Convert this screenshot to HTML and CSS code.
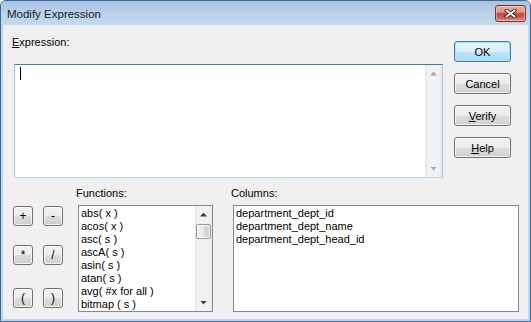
FILE: index.html
```html
<!DOCTYPE html>
<html lang="en">
<head>
  <meta charset="UTF-8" />
  <title>Modify Expression</title>
  <link rel="stylesheet" href="styles.css">
</head>
<body>

  <div class="window">
    <div class="titlebar">
      <span class="title">Modify Expression</span>
      <button class="close" title="Close">
        <svg width="13" height="9" viewBox="0 0 13 9">
          <path d="M2.5 1.5 L10.5 7.5 M10.5 1.5 L2.5 7.5" stroke="#4a1c1c" stroke-width="3.6" stroke-linecap="square" fill="none"/>
          <path d="M2.5 1.5 L10.5 7.5 M10.5 1.5 L2.5 7.5" stroke="#ffffff" stroke-width="1.8" stroke-linecap="square" fill="none"/>
        </svg>
      </button>
    </div>

    <div class="frame">
      <div class="content">

        <div class="top">
          <div class="expr">
            <div class="label label-expr"><u>E</u>xpression:</div>
            <div class="editbox">
              <div class="edit-text"><span class="caret"></span></div>
              <div class="scrollbar disabled">
                <div class="arrow up"></div>
                <div class="track"></div>
                <div class="arrow down"></div>
              </div>
            </div>
          </div>

          <div class="buttons">
            <button class="btn default">OK</button>
            <button class="btn">Cancel</button>
            <button class="btn"><u>V</u>erify</button>
            <button class="btn"><u>H</u>elp</button>
          </div>
        </div>

        <div class="bottom">
          <div class="ops">
            <button class="btn op">+</button>
            <button class="btn op">-</button>
            <button class="btn op">*</button>
            <button class="btn op">/</button>
            <button class="btn op">(</button>
            <button class="btn op">)</button>
          </div>

          <div class="functions">
            <div class="label">Functions:</div>
            <div class="listbox">
              <ul class="items">
                <li>abs( x )</li>
                <li>acos( x )</li>
                <li>asc( s )</li>
                <li>ascA( s )</li>
                <li>asin( s )</li>
                <li>atan( s )</li>
                <li>avg( #x for all )</li>
                <li>bitmap ( s )</li>
              </ul>
              <div class="scrollbar">
                <div class="arrow up"></div>
                <div class="track">
                  <div class="thumb"></div>
                </div>
                <div class="arrow down"></div>
              </div>
            </div>
          </div>

          <div class="columns">
            <div class="label">Columns:</div>
            <div class="listbox wide">
              <ul class="items">
                <li>department_dept_id</li>
                <li>department_dept_name</li>
                <li>department_dept_head_id</li>
              </ul>
            </div>
          </div>
        </div>

      </div>
    </div>
  </div>

</body>
</html>
```

FILE: styles.css
```css
* {
  box-sizing: border-box;
}

body {
  margin: 0;
  font-family: "Liberation Sans", Arial, sans-serif;
  font-size: 11px;
  color: #000;
  background: #f0f0f0;
}

.window {
  width: 531px;
  height: 322px;
  border: 1px solid #3a6a9c;
  border-radius: 6px 6px 0 0;
  display: flex;
  flex-direction: column;
  overflow: hidden;
  background: #bcd4ee;
}

.titlebar {
  height: 24px;
  display: flex;
  justify-content: space-between;
  align-items: flex-start;
  background: linear-gradient(#a8c2df, #bcd3ec 60%, #c3d8ef);
  padding: 0 4px 0 6px;
}

.title {
  font-size: 11.5px;
  line-height: 14px;
  margin-top: 6px;
  color: #1a1a1a;
}

.close {
  margin-top: 4px;
  width: 31px;
  height: 17px;
  padding: 0;
  border: 1px solid #7a3232;
  border-radius: 3px;
  background: linear-gradient(#eab0a3 0%, #df9283 42%, #c6483c 50%, #cd5c4e 75%, #e39282 100%);
  box-shadow: inset 0 0 0 1px rgba(255, 220, 210, 0.5);
  display: flex;
  align-items: center;
  justify-content: center;
}

.frame {
  flex: 1;
  padding: 0 2px 2px 2px;
  background: #bcd4ee;
}

.content {
  height: 100%;
  background: #f0f0f0;
  padding: 11px 0 0 11px;
}

.label {
  line-height: 13px;
  height: 13px;
  margin-left: -2px;
  margin-bottom: 5px;
}

.label-expr {
  margin-bottom: 15px;
}

.top {
  display: flex;
  align-items: flex-start;
}

.editbox {
  width: 429px;
  height: 114px;
  background: #fff;
  border: 1px solid #a4c9e3;
  border-top-color: #3d7bad;
  border-bottom-color: #b7d9ed;
  display: flex;
}

.edit-text {
  flex: 1;
  padding: 2px 0 0 5px;
}

.caret {
  display: block;
  width: 1px;
  height: 13px;
  background: #000;
}

.scrollbar {
  width: 17px;
  display: flex;
  flex-direction: column;
  background: linear-gradient(to right, #e6e6e6, #f2f2f2 20%, #f2f2f2 80%, #e9e9e9);
}

.scrollbar .track {
  flex: 1;
}

.arrow {
  height: 17px;
  display: flex;
  align-items: center;
  justify-content: center;
}

.arrow::before {
  content: "";
  width: 7px;
  height: 4px;
  background: #3e3e3e;
}

.arrow.up::before {
  clip-path: polygon(50% 0, 100% 100%, 0 100%);
}

.arrow.down::before {
  clip-path: polygon(0 0, 100% 0, 50% 100%);
}

.scrollbar.disabled .arrow::before {
  background: #a8a8a8;
}

.thumb {
  margin: 1px 1px 0 1px;
  height: 15px;
  border: 1px solid #979797;
  border-radius: 2px;
  background: linear-gradient(to right, #f4f4f4, #e6e6e6 50%, #d8d8d8 51%, #cfcfcf);
  box-shadow: inset 0 0 0 1px rgba(255, 255, 255, 0.8);
}

.buttons {
  margin-left: 11px;
  padding-top: 5px;
  display: flex;
  flex-direction: column;
  gap: 11px;
}

.btn {
  font-family: inherit;
  font-size: 11px;
  color: #000;
  width: 57px;
  height: 21px;
  padding: 0;
  border: 1px solid #707070;
  border-radius: 3px;
  background: linear-gradient(#f2f2f2 0%, #ebebeb 50%, #dddddd 51%, #cfcfcf 100%);
  box-shadow: inset 0 0 0 1px rgba(255, 255, 255, 0.75);
}

.btn.default {
  border-color: #3c7fb1;
  background: linear-gradient(#eaf6fd 0%, #d9f0fc 50%, #bee6fd 51%, #a7d9f5 100%);
  box-shadow: inset 0 0 0 1px #9ee0ff;
}

.btn u {
  text-underline-offset: 1px;
}

.bottom {
  margin-top: 9px;
  display: flex;
  align-items: flex-start;
}

.ops {
  margin: 19px 0 0 -1px;
  display: grid;
  grid-template-columns: 20px 20px;
  grid-template-rows: 39px 43px 20px;
  column-gap: 10px;
  align-items: start;
}

.btn.op {
  width: 20px;
  height: 20px;
  font-size: 12px;
}

.functions {
  margin-left: 15px;
}

.columns {
  margin-left: 20px;
}

.listbox {
  width: 135px;
  height: 107px;
  background: #fff;
  border: 1px solid #828790;
  display: flex;
  overflow: hidden;
}

.listbox.wide {
  width: 286px;
}

.items {
  flex: 1;
  list-style: none;
  margin: 0;
  padding: 1px 0 0 2px;
  overflow: hidden;
}

.items li {
  line-height: 13px;
  white-space: nowrap;
}
```
